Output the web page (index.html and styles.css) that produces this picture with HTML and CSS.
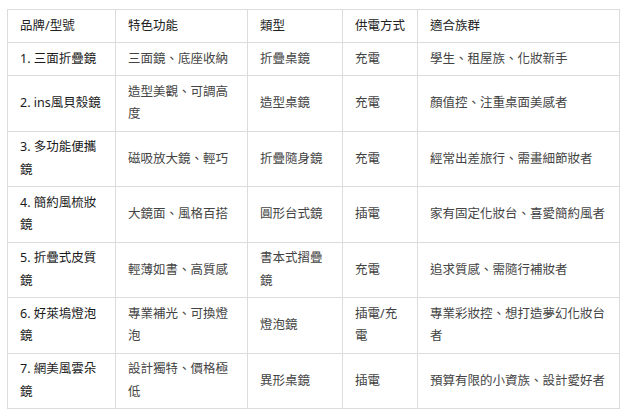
FILE: index.html
```html
<!DOCTYPE html>
<html lang="zh-Hant">
<head>
<meta charset="utf-8">
<title>化妝鏡比較</title>
<link rel="stylesheet" href="styles.css">
</head>
<body>
<div class="wrap">
<table class="compare">
  <colgroup>
    <col class="c-brand">
    <col class="c-feature">
    <col class="c-type">
    <col class="c-power">
    <col class="c-user">
  </colgroup>
  <thead>
    <tr>
      <th>品牌/型號</th>
      <th>特色功能</th>
      <th>類型</th>
      <th>供電方式</th>
      <th>適合族群</th>
    </tr>
  </thead>
  <tbody>
    <tr>
      <td class="name">1. 三面折疊鏡</td>
      <td>三面鏡、底座收納</td>
      <td>折疊桌鏡</td>
      <td>充電</td>
      <td>學生、租屋族、化妝新手</td>
    </tr>
    <tr>
      <td class="name">2. ins風貝殼鏡</td>
      <td>造型美觀、可調高度</td>
      <td>造型桌鏡</td>
      <td>充電</td>
      <td>顏值控、注重桌面美感者</td>
    </tr>
    <tr>
      <td class="name">3. 多功能便攜鏡</td>
      <td>磁吸放大鏡、輕巧</td>
      <td>折疊隨身鏡</td>
      <td>充電</td>
      <td>經常出差旅行、需畫細節妝者</td>
    </tr>
    <tr>
      <td class="name">4. 簡約風梳妝鏡</td>
      <td>大鏡面、風格百搭</td>
      <td>圓形台式鏡</td>
      <td>插電</td>
      <td>家有固定化妝台、喜愛簡約風者</td>
    </tr>
    <tr>
      <td class="name">5. 折疊式皮質鏡</td>
      <td>輕薄如書、高質感</td>
      <td>書本式摺疊鏡</td>
      <td>充電</td>
      <td>追求質感、需隨行補妝者</td>
    </tr>
    <tr>
      <td class="name">6. 好萊塢燈泡鏡</td>
      <td>專業補光、可換燈泡</td>
      <td>燈泡鏡</td>
      <td>插電/充電</td>
      <td>專業彩妝控、想打造夢幻化妝台者</td>
    </tr>
    <tr>
      <td class="name">7. 網美風雲朵鏡</td>
      <td>設計獨特、價格極低</td>
      <td>異形桌鏡</td>
      <td>插電</td>
      <td>預算有限的小資族、設計愛好者</td>
    </tr>
  </tbody>
</table>
</div>
</body>
</html>
```

FILE: styles.css
```css
html, body {
  margin: 0;
  padding: 0;
  background: #ffffff;
}

body {
  font-family: "Noto Sans", "Noto Sans CJK TC", sans-serif;
  font-size: 12.5px;
  color: #3a3a3a;
}

.wrap {
  padding: 9px 7px;
}

.compare {
  border-collapse: collapse;
  table-layout: fixed;
  width: 613px;
  border: 1px solid #dcdcdc;
}

.c-brand { width: 108px; }
.c-feature { width: 132px; }
.c-type { width: 95px; }
.c-power { width: 75px; }
.c-user { width: 202px; }

.compare th,
.compare td {
  border: 1px solid #dcdcdc;
  padding: 4.75px 12px;
  line-height: 22.5px;
  text-align: left;
  vertical-align: middle;
  word-break: normal;
}

.compare th {
  font-weight: 400;
  color: #222222;
}

.compare td {
  color: #444444;
}

.compare td.name {
  color: #1a1a1a;
  font-weight: 400;
}
```
